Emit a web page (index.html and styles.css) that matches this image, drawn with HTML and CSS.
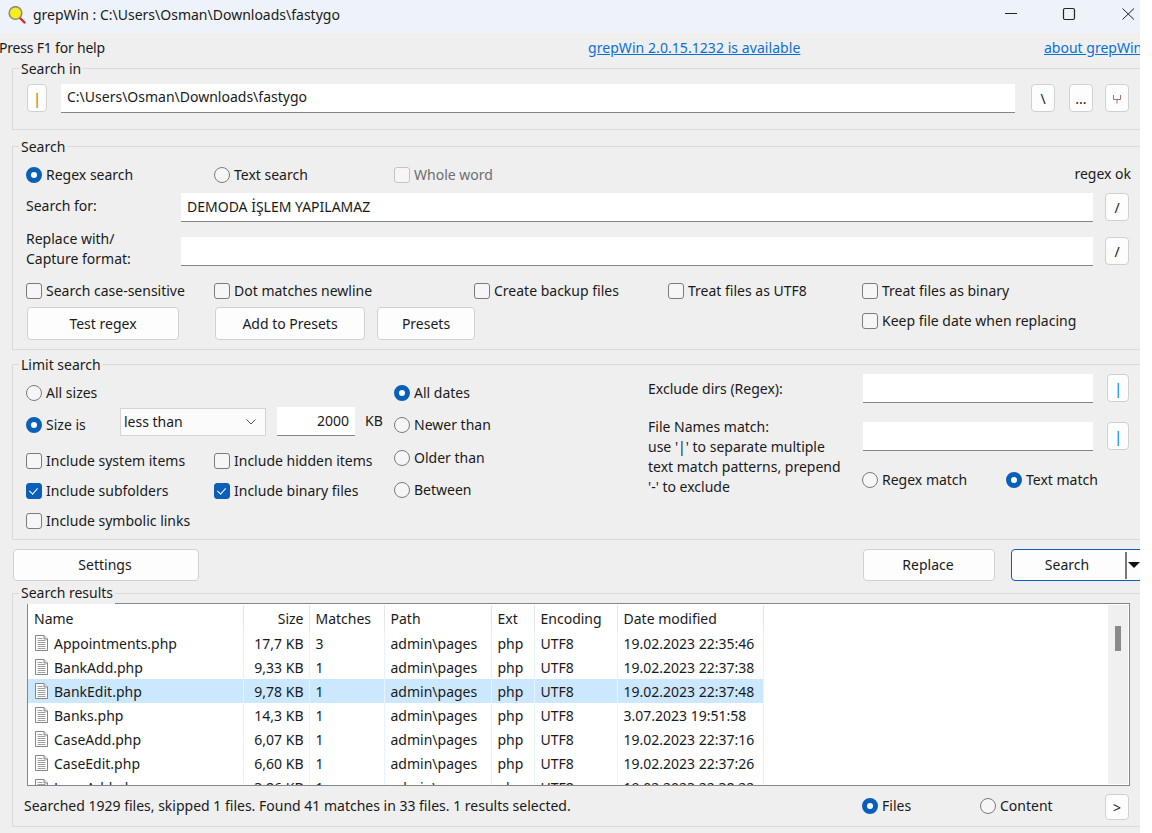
FILE: index.html
```html
<!DOCTYPE html>
<html lang="en">
<head>
  <meta charset="UTF-8" />
  <title>grepWin</title>
  <link rel="stylesheet" href="styles.css">
</head>
<body>
<div class="window">
  <div class="titlebar">
    <svg class="logo" width="20" height="20" viewBox="0 0 20 20">
      <path d="M12 12 L16.5 16.5" stroke="#d8262c" stroke-width="2.4" stroke-linecap="round"/>
      <circle cx="7.5" cy="7" r="6.3" fill="#f5ee1a" stroke="#8c8c80" stroke-width="1.6"/>
    </svg>
    <span class="title">grepWin : C:\Users\Osman\Downloads\fastygo</span>
    <svg class="winctl" width="140" height="20" viewBox="0 0 140 20">
      <path d="M0 13.5 H12" stroke="#222" fill="none"/>
      <rect x="58.5" y="8.5" width="11" height="11" rx="1.5" stroke="#222" fill="none" stroke-width="1.2"/>
      <path d="M117.5 8.5 L129 19.5 M129 8.5 L117.5 19.5" stroke="#222" fill="none"/>
    </svg>
  </div>

  <div class="helpbar">
    <span class="help">Press F1 for help</span>
    <a class="link update">grepWin 2.0.15.1232 is available</a>
    <a class="link about">about grepWin</a>
  </div>

  <fieldset class="group group-in">
    <legend>Search in</legend>
    <div class="path-row">
      <button class="btn tool narrow"><span class="orange">|</span></button>
      <div class="field path">C:\Users\Osman\Downloads\fastygo</div>
      <button class="btn tool">\</button>
      <button class="btn tool">...</button>
      <button class="btn tool small">
        <svg width="10" height="10" viewBox="0 0 10 10"><path d="M1.5 1 V5.5 H8.5 V1 M5 5.5 V9.5" stroke="#a5706a" fill="none"/></svg>
      </button>
    </div>
  </fieldset>

  <fieldset class="group group-search">
    <legend>Search</legend>
    <div class="mode-row">
      <label class="opt"><i class="radio on"></i>Regex search</label>
      <label class="opt"><i class="radio"></i>Text search</label>
      <label class="opt disabled"><i class="check"></i>Whole word</label>
      <span class="regex-ok">regex ok</span>
    </div>
    <div class="input-row first">
      <span class="one-line">Search for:</span>
      <div class="field">DEMODA İŞLEM YAPILAMAZ</div>
      <button class="btn tool">/</button>
    </div>
    <div class="input-row second">
      <span class="two-line">Replace with/<br>Capture format:</span>
      <div class="field"></div>
      <button class="btn tool">/</button>
    </div>
    <div class="opts-row">
      <label class="opt"><i class="check"></i>Search case-sensitive</label>
      <label class="opt"><i class="check"></i>Dot matches newline</label>
      <label class="opt"><i class="check"></i>Create backup files</label>
      <label class="opt"><i class="check"></i>Treat files as UTF8</label>
      <label class="opt"><i class="check"></i>Treat files as binary</label>
    </div>
    <div class="action-row">
      <button class="btn test">Test regex</button>
      <button class="btn add">Add to Presets</button>
      <button class="btn presets">Presets</button>
      <label class="opt keep"><i class="check"></i>Keep file date when replacing</label>
    </div>
  </fieldset>

  <fieldset class="group group-limit">
    <legend>Limit search</legend>
    <div class="limit-cols">
      <div class="limit-left">
        <label class="opt top"><i class="radio"></i>All sizes</label>
        <div class="size-row">
          <label class="opt size-opt"><i class="radio on"></i>Size is</label>
          <div class="select">less than
            <svg width="10" height="6" viewBox="0 0 10 6"><path d="M0.5 0.5 L5 5 L9.5 0.5" stroke="#555" fill="none"/></svg>
          </div>
          <div class="field size-val">2000</div>
          <span>KB</span>
        </div>
        <div class="include-grid">
          <label class="opt"><i class="check"></i>Include system items</label>
          <label class="opt"><i class="check"></i>Include hidden items</label>
          <label class="opt"><i class="check on"></i>Include subfolders</label>
          <label class="opt"><i class="check on"></i>Include binary files</label>
          <label class="opt"><i class="check"></i>Include symbolic links</label>
        </div>
      </div>
      <div class="limit-mid">
        <label class="opt"><i class="radio on"></i>All dates</label>
        <label class="opt"><i class="radio"></i>Newer than</label>
        <label class="opt"><i class="radio"></i>Older than</label>
        <label class="opt"><i class="radio"></i>Between</label>
      </div>
      <div class="limit-right">
        <div class="filter-row">
          <span class="filter-label">Exclude dirs (Regex):</span>
          <div class="field"></div>
          <button class="btn tool thin"><span class="blue">|</span></button>
        </div>
        <div class="filter-row names">
          <span class="filter-text">File Names match:<br>use '|' to separate multiple<br>text match patterns, prepend<br>'-' to exclude</span>
          <div class="field"></div>
          <button class="btn tool thin"><span class="blue">|</span></button>
          <div class="match-opts">
            <label class="opt"><i class="radio"></i>Regex match</label>
            <label class="opt"><i class="radio on"></i>Text match</label>
          </div>
        </div>
      </div>
    </div>
  </fieldset>

  <div class="button-bar">
    <button class="btn settings">Settings</button>
    <button class="btn replace">Replace</button>
    <button class="btn search">
      <span class="search-text">Search</span><span class="split"></span><span class="arrow"></span>
    </button>
  </div>

  <fieldset class="group group-results">
    <legend>Search results</legend>
    <div class="list">
      <table>
        <colgroup>
          <col class="c-name"><col class="c-size"><col class="c-matches"><col class="c-path"><col class="c-ext"><col class="c-enc"><col class="c-date">
        </colgroup>
        <thead>
          <tr><th>Name</th><th class="num">Size</th><th>Matches</th><th>Path</th><th>Ext</th><th>Encoding</th><th>Date modified</th></tr>
        </thead>
        <tbody id="rows"></tbody>
      </table>
      <div class="scrollbar"><div class="thumb"></div></div>
    </div>
    <div class="status-row">
      <span class="status">Searched 1929 files, skipped 1 files. Found 41 matches in 33 files. 1 results selected.</span>
      <label class="opt files"><i class="radio on"></i>Files</label>
      <label class="opt content"><i class="radio"></i>Content</label>
      <button class="btn tool next">&gt;</button>
    </div>
  </fieldset>
</div>

<script>
  var files = [
    ["Appointments.php", "17,7 KB", "3", "19.02.2023 22:35:46"],
    ["BankAdd.php", "9,33 KB", "1", "19.02.2023 22:37:38"],
    ["BankEdit.php", "9,78 KB", "1", "19.02.2023 22:37:48"],
    ["Banks.php", "14,3 KB", "1", "3.07.2023 19:51:58"],
    ["CaseAdd.php", "6,07 KB", "1", "19.02.2023 22:37:16"],
    ["CaseEdit.php", "6,60 KB", "1", "19.02.2023 22:37:26"],
    ["LoanAdd.php", "3,86 KB", "1", "19.02.2023 22:38:22"]
  ];
  var icon = '<svg class="file" width="15" height="18" viewBox="0 0 15 18">' +
    '<path d="M1.5 1.5 H10 L13.5 5 V16.5 H1.5 Z" fill="#fff" stroke="#858585"/>' +
    '<path d="M10 1.5 V5 H13.5" fill="#e8e8e8" stroke="#858585"/>' +
    '<path d="M3.5 4.5 H8.5 M3.5 6.5 H11.5 M3.5 8.5 H11.5 M3.5 10.5 H11.5 M3.5 12.5 H11.5 M3.5 14.5 H11.5" stroke="#a0a0a0"/></svg>';
  var html = "";
  files.forEach(function (f, i) {
    html += '<tr' + (i === 2 ? ' class="selected"' : '') + '>' +
      '<td class="name">' + icon + f[0] + '</td>' +
      '<td class="num">' + f[1] + '</td>' +
      '<td>' + f[2] + '</td><td>admin\\pages</td><td>php</td><td>UTF8</td>' +
      '<td>' + f[3] + '</td></tr>';
  });
  document.getElementById("rows").innerHTML = html;
</script>
</body>
</html>
```

FILE: styles.css
```css
* {
  box-sizing: border-box;
}
html, body {
  margin: 0;
  height: 100%;
  background: #fff;
}
body {
  font-family: "Noto Sans", sans-serif;
  font-size: 14px;
  line-height: 20px;
  color: #1a1a1a;
}
.window {
  width: 1140px;
  height: 833px;
  background: #efefef;
  overflow: hidden;
}

/* title bar */
.titlebar {
  height: 33px;
  background: #eef3fa;
  display: flex;
  align-items: center;
  padding-left: 8px;
}
.logo {
  flex: none;
  margin-top: -2px;
}
.title {
  margin-left: 5px;
  margin-top: -3px;
  white-space: nowrap;
}
.winctl {
  flex: none;
  margin-left: auto;
  margin-right: -5px;
  margin-top: -14px;
  overflow: visible;
}

/* help line */
.helpbar {
  height: 25px;
  padding-top: 5px;
  display: grid;
  grid-template-columns: 588px 456px 1fr;
  white-space: nowrap;
}
.help {
  margin-left: -1px;
  letter-spacing: -0.2px;
}
.link {
  color: #0a6fd6;
  text-decoration: underline;
}
.update {
  letter-spacing: 0.06px;
}
.about {
  overflow: hidden;
}

/* groups */
.group {
  width: 1150px;
  margin: 0 0 0 12px;
  padding: 0 32px 0 13px;
  border: 1px solid #dadada;
  min-width: 0;
}
.group legend {
  height: 20px;
  margin-left: -7px;
  padding: 1px 2px 0;
  line-height: 20px;
}
.group-in {
  height: 72px;
  padding-top: 6px;
}
.group-search {
  margin-top: 6px;
  height: 214px;
}
.group-limit {
  margin-top: 4px;
  height: 186px;
}
.group-results {
  margin-top: 1px;
  height: 245px;
}

/* shared controls */
.field {
  height: 29px;
  background: #fff;
  border-bottom: 1px solid #858585;
  padding: 0 6px;
  line-height: 27px;
  white-space: nowrap;
}
.btn {
  flex: none;
  font: inherit;
  color: inherit;
  background: #fdfdfd;
  border: 1px solid #d0d0d0;
  border-radius: 4px;
  padding: 0;
}
.tool {
  width: 24px;
  height: 28px;
  padding-top: 2px;
}
.orange {
  color: #b9650f;
}
.blue {
  color: #0a6fd6;
}
.opt {
  display: flex;
  align-items: center;
  height: 20px;
  white-space: nowrap;
}
.disabled {
  color: #6d6d6d;
}
.radio, .check {
  flex: none;
  width: 16px;
  height: 16px;
  margin-right: 4px;
  border: 1px solid #7b7b7b;
  background: #f6f6f6;
}
.radio {
  border-radius: 50%;
}
.radio.on {
  border: 5px solid #0a60b8;
  background: #fff;
}
.check {
  border-radius: 3px;
  position: relative;
}
.disabled .check {
  border-color: #c4c4c4;
}
.check.on {
  background: #0a60b8;
  border-color: #0a60b8;
}
.check.on::after {
  content: "";
  position: absolute;
  left: 4px;
  top: 2px;
  width: 4px;
  height: 7px;
  border: solid #fff;
  border-width: 0 1px 1px 0;
  transform: rotate(42deg);
}

/* search in */
.path-row {
  display: flex;
  align-items: flex-start;
  padding-left: 1px;
}
.narrow {
  width: 20px;
}
.path {
  flex: 1;
  margin: 0 16px 0 14px;
  line-height: 26px;
}
.path-row .tool + .tool {
  margin-left: 14px;
}
.path-row .tool.small {
  margin-left: 12px;
}

/* search */
.mode-row {
  display: grid;
  grid-template-columns: 188px 180px 1fr auto;
  margin-top: 9px;
}
.regex-ok {
  margin-right: -2px;
  margin-top: -1px;
}
.input-row {
  display: grid;
  grid-template-columns: 155px 912px 24px;
  align-items: start;
}
.input-row .tool {
  margin-left: 12px;
}
.input-row.first {
  margin-top: 8px;
}
.input-row.second {
  margin-top: 15px;
}
.one-line {
  margin-top: 3px;
}
.two-line {
  margin-top: -8px;
  height: 29px;
}
.opts-row {
  display: grid;
  grid-template-columns: 188px 260px 194px 194px 1fr;
  margin-top: 15px;
}
.action-row {
  display: flex;
  align-items: center;
  margin-top: 6px;
  padding-left: 1px;
}
.action-row .btn {
  height: 33px;
}
.test {
  width: 152px;
}
.add {
  width: 150px;
  margin-left: 36px;
}
.presets {
  width: 98px;
  margin-left: 12px;
}
.keep {
  margin-left: 387px;
  margin-top: -6px;
}

/* limit search */
.limit-cols {
  display: grid;
  grid-template-columns: 368px 254px 1fr;
}
.limit-left {
  padding-top: 9px;
}
.size-row {
  display: flex;
  align-items: flex-start;
  margin-top: 5px;
  height: 30px;
}
.size-opt {
  width: 94px;
  margin-top: 7px;
}
.select {
  width: 146px;
  height: 28px;
  padding: 0 9px 0 3px;
  background: #fbfbfb;
  border: 1px solid #d4d4d4;
  line-height: 26px;
  display: flex;
  align-items: center;
  justify-content: space-between;
}
.size-val {
  width: 78px;
  margin: -1px 10px 0 11px;
  text-align: right;
}
.size-row > span {
  margin-top: 3px;
}
.include-grid {
  display: grid;
  grid-template-columns: 188px 1fr;
  row-gap: 10px;
  margin-top: 13px;
}
.limit-mid {
  padding-top: 9px;
}
.limit-mid .opt:nth-child(2) {
  margin-top: 12px;
}
.limit-mid .opt:nth-child(3) {
  margin-top: 13px;
}
.limit-mid .opt:nth-child(4) {
  margin-top: 12px;
}
.filter-row {
  display: grid;
  grid-template-columns: 215px 230px 36px;
  align-items: start;
}
.filter-label {
  margin-top: 5px;
}
.filter-row .tool {
  width: 22px;
  margin-left: 14px;
}
.filter-row.names {
  grid-template-rows: 34px auto;
  margin-top: 14px;
}
.filter-text {
  grid-row: 1 / span 2;
}
.filter-row.names .field,
.filter-row.names .tool {
  margin-top: 5px;
}
.match-opts {
  grid-column: 2 / span 2;
  display: grid;
  grid-template-columns: 144px 1fr;
  margin: 19px 0 0 -1px;
}

/* bottom buttons */
.button-bar {
  display: flex;
  margin-top: 9px;
  padding-left: 13px;
  height: 32px;
}
.settings {
  width: 186px;
  padding-right: 2px;
}
.replace {
  width: 132px;
  margin-left: 664px;
  padding-right: 2px;
}
.search {
  width: 140px;
  margin-left: 16px;
  border-color: #0a60b8;
  display: flex;
  align-items: center;
}
.search-text {
  width: 110px;
  margin-right: 2px;
  text-align: center;
}
.split {
  width: 2px;
  height: 27px;
  margin-left: 1px;
  background: #777;
}
.arrow {
  margin-left: 1px;
  border: solid transparent;
  border-width: 6px 6px 0;
  border-top-color: #111;
}

/* results */
.group-results legend {
  position: relative;
  z-index: 1;
  height: 22px;
  background: #efefef;
}
.list {
  position: relative;
  width: 1103px;
  height: 183px;
  margin: -1px 0 0 1px;
  background: #fff;
  border: 1px solid #868686;
  overflow: hidden;
}
table {
  width: 735px;
  margin-top: 1px;
  table-layout: fixed;
  border-collapse: collapse;
}
.c-name { width: 215px; }
.c-size { width: 66px; }
.c-matches { width: 75px; }
.c-path { width: 107px; }
.c-ext { width: 43px; }
.c-enc { width: 83px; }
.c-date { width: 146px; }
th {
  height: 26px;
  padding: 2px 0 0 6px;
  font-weight: normal;
  text-align: left;
  border-right: 1px solid #e6e6e6;
}
td {
  height: 24px;
  padding: 2px 0 0 6px;
  border-right: 1px solid #eaf2fb;
  white-space: nowrap;
}
th.num, td.num {
  text-align: right;
  padding: 2px 5px 0 0;
}
.file {
  vertical-align: -3px;
  margin-right: 5px;
}
.selected td {
  background: #cce8ff;
}
.scrollbar {
  position: absolute;
  top: 1px;
  right: 1px;
  bottom: 1px;
  width: 20px;
  background: #f0f0f0;
}
.thumb {
  width: 6px;
  height: 25px;
  margin: 21px 0 0 7px;
  background: #8a8a8a;
}
.status-row {
  display: flex;
  align-items: center;
  height: 40px;
  margin-left: -2px;
}
.status {
  width: 838px;
  white-space: nowrap;
}
.files {
  width: 118px;
}
.content {
  width: 125px;
}
.next {
  height: 26px;
  margin-top: 2px;
}
```
